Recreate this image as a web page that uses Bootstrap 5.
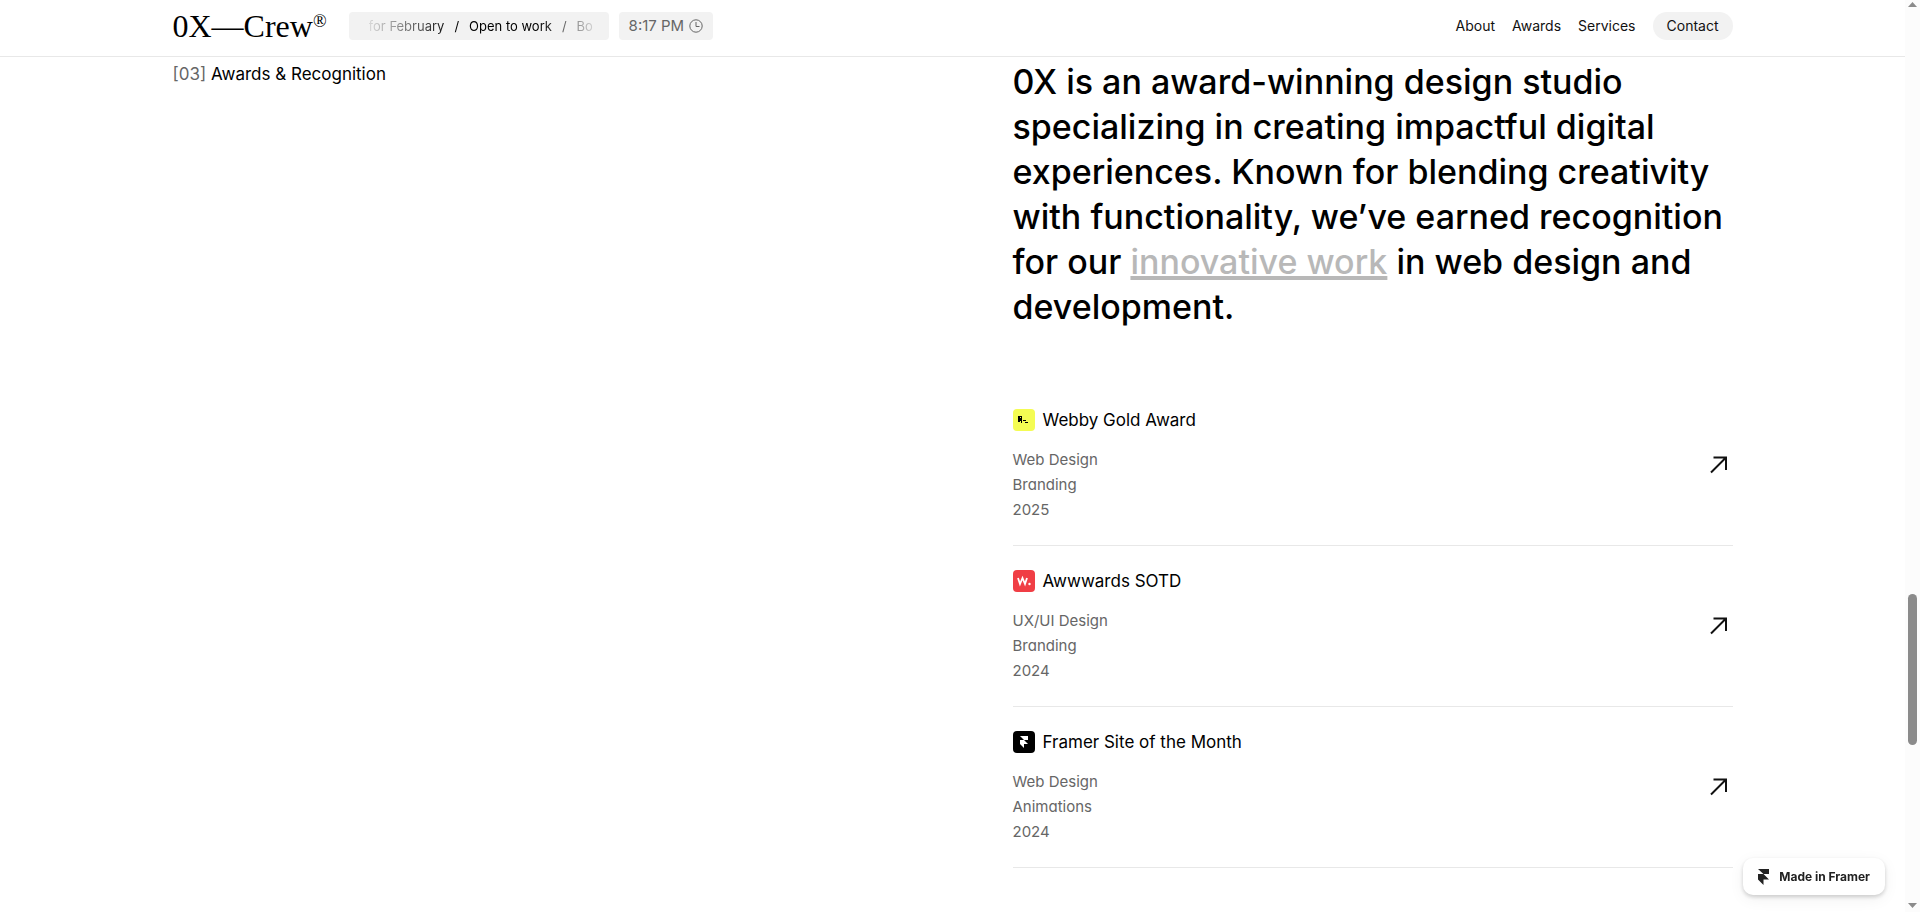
<!DOCTYPE html>
<html lang="en">
<head>
<meta charset="utf-8">
<meta name="viewport" content="width=device-width, initial-scale=1">
<title>0X—Crew</title>
<link href="https://cdn.jsdelivr.net/npm/bootstrap@5.3.0/dist/css/bootstrap.min.css" rel="stylesheet">
<style>
  body { font-family: Inter, "Liberation Sans", sans-serif; color: #000; background: #fff; }
  a { color: inherit; text-decoration: none; }
  .page-wrap { max-width: 1560px; }
  .site-head { background: #fff; border-bottom: 1px solid #e8e8e8; height: 57px; padding-bottom: 14px; }
  .brand-name { font: 32px/32px "Liberation Serif", serif; }
  .brand-name sup { font-size: 18px; top: -10px; line-height: 0; }
  .chip { background: #f2f2f2; border-radius: 4px; height: 28px; flex-shrink: 0; }
  .head-left { gap: 10px; }
  .ticker { width: 260px; margin-left: 12px; padding: 0 14px 0 20px; font-size: 13px; line-height: 20px; }
  .ticker-track {
    gap: 10px; overflow: hidden; white-space: nowrap;
    -webkit-mask-image: linear-gradient(90deg, rgba(0,0,0,.1), #000 37%, #000 75%, rgba(0,0,0,.1));
    mask-image: linear-gradient(90deg, rgba(0,0,0,.1), #000 37%, #000 75%, rgba(0,0,0,.1));
  }
  .clock { padding: 0 10px; gap: 5px; font-size: 15px; color: #666; }
  .site-nav { font-size: 14px; line-height: 20px; gap: 17px; color: #111; }
  .contact-btn { background: #f2f2f2; border: 0; border-radius: 14px; height: 28px; padding: 0 14px; color: #111; }
  .section-label { font-size: 17px; line-height: 28px; padding-top: 3px; }
  .muted { color: #666; }
  .two-col { display: grid; grid-template-columns: 1fr 1fr; column-gap: 120px; }
  .statement { font-size: 34px; line-height: 45px; font-weight: 500; margin: 0; padding: 2px 0 56px; }
  .statement a { color: #b8b8b8; text-decoration: underline; text-decoration-thickness: 4px; }
  .award { border-bottom: 1px solid #e8e8e8; padding: 22px 0 23px; }
  .award h2 { font-size: 17px; line-height: 26px; font-weight: 400; margin: 0 0 14px; gap: 8px; }
  .award li { font-size: 15px; line-height: 25px; color: #666; }
  .alt-a { font-feature-settings: "cv11"; }
  .made-in { right: 35px; bottom: 17px; height: 37px; padding: 0 15px; gap: 10px; border-radius: 10px; background: #fff; color: #222; font-size: 12px; font-weight: 700; line-height: 20px; box-shadow: 0 2px 4px rgba(0,0,0,.18), 0 4px 16px rgba(0,0,0,.06); }
  .rail { width: 15px; background: #fcfcfc; padding: 2px 0 4px; z-index: 1040; }
  .rail-thumb { width: 9px; height: 16.5vh; border-radius: 5px; background: #8b8b8b; }
  .rail-above { flex: 587 1 0; }
  .rail-below { flex: 158 1 0; }
</style>
</head>
<body>
<div class="d-flex min-vh-100">
  <div class="flex-grow-1">
    <header class="site-head sticky-top d-flex align-items-end">
      <div class="page-wrap container-fluid p-0 d-flex align-items-center justify-content-between">
        <div class="head-left d-flex align-items-center">
          <a class="brand-name text-nowrap" href="#">0X—Crew<sup>®</sup></a>
          <div class="chip ticker d-flex align-items-center">
            <div class="ticker-track d-flex w-100"><span>for February</span><span>/</span><span>Open to work</span><span>/</span><span>Bo</span></div>
          </div>
          <div class="chip clock d-flex align-items-center">
            <span>8:17 PM</span>
            <svg width="14" height="14" viewBox="0 0 14 14" fill="none" stroke="#666" aria-hidden="true"><circle cx="7" cy="7" r="6.2"/><path d="M7 3v4.5h3.5"/></svg>
          </div>
        </div>
        <nav class="site-nav d-flex align-items-center">
          <a href="#">About</a><a href="#">Awards</a><a href="#">Services</a>
          <button class="contact-btn" type="button">Contact</button>
        </nav>
      </div>
    </header>
    <main class="page-wrap container-fluid p-0 two-col">
      <div class="section-label"><span class="muted">[03]</span> Awards &amp; Recognition</div>
      <div>
        <p class="statement">0X is an award-winning design studio specializing in creating impactful digital experiences. Known for blending creativity with functionality, we’ve earned recognition for our <a href="#">innovative work</a> in web design and development.</p>
        <article class="award d-flex align-items-center justify-content-between">
          <div>
            <h2 class="d-flex align-items-center"><svg width="22" height="22" viewBox="0 0 22 22" aria-hidden="true"><rect width="22" height="22" rx="4" fill="#f4fc53"/><path d="M5 7h4v7H8v-2H7v1H5z" fill="#000"/><path d="M10 11h3v1h-3zM12 13h3v1h-3z" fill="#000"/><path d="M7 8h1v1H7z" fill="#f4fc53"/></svg>Webby Gold Award</h2>
            <ul class="list-unstyled m-0"><li>Web Design</li><li class="alt-a">Branding</li><li>2025</li></ul>
          </div>
          <a href="#" aria-label="Webby Gold Award"><svg class="d-block" width="28" height="28" viewBox="0 0 28 28" fill="none" stroke="#111" stroke-width="2" aria-hidden="true"><path d="M6 21.500 21 6.500M8.500 6.500h13.500M21 6v13"/></svg></a>
        </article>
        <article class="award d-flex align-items-center justify-content-between">
          <div>
            <h2 class="d-flex align-items-center"><svg width="22" height="22" viewBox="0 0 22 22" aria-hidden="true"><rect width="22" height="22" rx="4" fill="#f03e45"/><path d="m5 8 2 6 2.500-6 2.500 6 2-6" fill="none" stroke="#fff" stroke-width="1.800"/><circle cx="16.500" cy="14" r="1.200" fill="#fff"/></svg>Awwwards SOTD</h2>
            <ul class="list-unstyled m-0"><li>UX/UI Design</li><li class="alt-a">Branding</li><li>2024</li></ul>
          </div>
          <a href="#" aria-label="Awwwards SOTD"><svg class="d-block" width="28" height="28" viewBox="0 0 28 28" fill="none" stroke="#111" stroke-width="2" aria-hidden="true"><path d="M6 21.500 21 6.500M8.500 6.500h13.500M21 6v13"/></svg></a>
        </article>
        <article class="award d-flex align-items-center justify-content-between">
          <div>
            <h2 class="d-flex align-items-center"><svg width="22" height="22" viewBox="0 0 22 22" aria-hidden="true"><rect width="22" height="22" rx="4" fill="#000"/><path d="M7 5h8v4h-4zM7 9h4l4 4H7zM7 13h4v4z" fill="#fff"/></svg>Framer Site of the Month</h2>
            <ul class="list-unstyled m-0"><li>Web Design</li><li class="alt-a">Animations</li><li>2024</li></ul>
          </div>
          <a href="#" aria-label="Framer Site of the Month"><svg class="d-block" width="28" height="28" viewBox="0 0 28 28" fill="none" stroke="#111" stroke-width="2" aria-hidden="true"><path d="M6 21.500 21 6.500M8.500 6.500h13.500M21 6v13"/></svg></a>
        </article>
      </div>
    </main>
  </div>
  <div class="rail sticky-top vh-100 d-flex flex-column align-items-center flex-shrink-0" aria-hidden="true">
    <svg width="9" height="5" viewBox="0 0 9 5"><path d="M0 5 4.500 0 9 5z" fill="#8b8b8b"/></svg>
    <div class="rail-above"></div><div class="rail-thumb"></div><div class="rail-below"></div>
    <svg width="9" height="5" viewBox="0 0 9 5"><path d="M0 0h9L4.500 5z" fill="#8b8b8b"/></svg>
  </div>
</div>
<a class="made-in position-fixed d-flex align-items-center" href="#"><svg width="11" height="16" viewBox="0 0 11 16" aria-hidden="true"><path d="M0 0h11v5H5.500zM0 5h5.500L11 10.500H0zM0 10.500h5.500V16z" fill="#222"/></svg>Made in Framer</a>
<script src="https://cdn.jsdelivr.net/npm/bootstrap@5.3.0/dist/js/bootstrap.bundle.min.js"></script>
</body>
</html>
